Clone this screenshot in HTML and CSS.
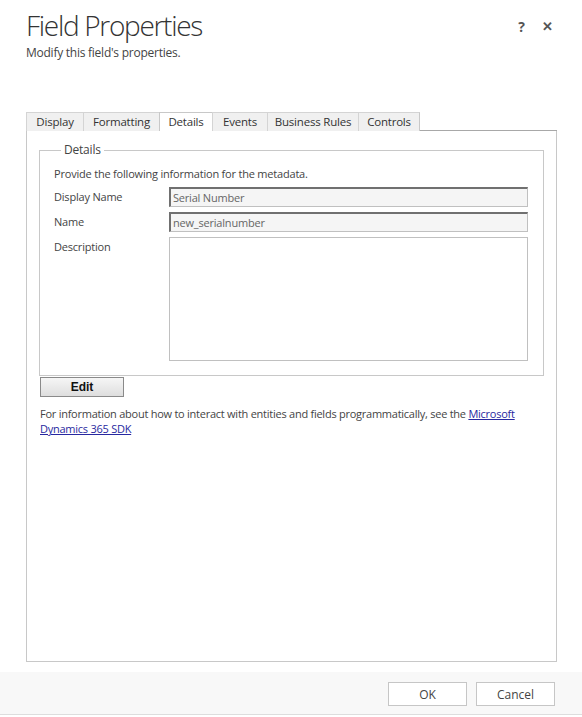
FILE: index.html
```html
<!DOCTYPE html>
<html lang="en">
<head>
    <meta charset="UTF-8">
    <title>Field Properties</title>
    <link rel="stylesheet" href="styles.css">
</head>
<body>
<div class="dialog">
    <div class="dialog_header">
        <div class="header_text">
            <h1 class="title">Field Properties</h1>
            <div class="subtitle">Modify this field's properties.</div>
        </div>
        <div class="header_icons">
            <span class="help_icon">?</span>
            <span class="close_icon">&#x2715;</span>
        </div>
    </div>

    <div class="dialog_body">
        <div class="tabs">
            <span class="tab tab_display">Display</span>
            <span class="tab tab_formatting">Formatting</span>
            <span class="tab tab_details tab_selected">Details</span>
            <span class="tab tab_events">Events</span>
            <span class="tab tab_rules">Business Rules</span>
            <span class="tab tab_controls">Controls</span>
            <span class="tab_rest"></span>
        </div>
        <div class="tab_panel">
            <fieldset class="details_box">
                <legend>Details</legend>
                <div class="intro">Provide the following information for the metadata.</div>
                <div class="field_row">
                    <label class="field_label">Display Name</label>
                    <input class="field_input" type="text" value="Serial Number" readonly>
                </div>
                <div class="field_row">
                    <label class="field_label">Name</label>
                    <input class="field_input" type="text" value="new_serialnumber" readonly>
                </div>
                <div class="field_row">
                    <label class="field_label">Description</label>
                    <textarea class="field_area"></textarea>
                </div>
            </fieldset>
            <button class="edit_button">Edit</button>
            <p class="sdk_note">For information about how to interact with entities and fields programmatically, see the <a href="#">Microsoft Dynamics 365 SDK</a></p>
        </div>
    </div>

    <div class="dialog_footer">
        <button class="footer_button">OK</button>
        <button class="footer_button">Cancel</button>
    </div>
</div>
</body>
</html>
```

FILE: styles.css
```css
body{
    margin: 0;
    background-color: white;
    font-family: 'Open Sans', sans-serif;
    font-size: 11px;
    letter-spacing: -0.2px;
    color: #444444;
}

.dialog{
    width: 582px;
    height: 717px;
    display: flex;
    flex-direction: column;
}

.dialog_header{
    display: flex;
    justify-content: space-between;
    padding: 7px 26px 0 26px;
    height: 112px;
    box-sizing: border-box;
}

.title{
    margin: 0;
    font-size: 28px;
    font-weight: 300;
    letter-spacing: -1.3px;
    color: #333333;
    line-height: 36px;
}

.subtitle{
    margin-top: 1px;
    font-size: 12px;
    letter-spacing: -0.25px;
    line-height: 18px;
    color: #444444;
}

.header_icons{
    display: flex;
    gap: 17px;
    padding-top: 10px;
    margin-right: 3px;
    font-size: 14px;
    font-weight: bold;
    letter-spacing: 0;
    color: #555555;
}

.close_icon{
    font-size: 13px;
}

.dialog_body{
    margin-left: 26px;
    width: 531px;
}

.tabs{
    display: flex;
    height: 19px;
}

.tab{
    box-sizing: border-box;
    background-color: #f0f0f0;
    border: 1px solid #d4d4d4;
    border-bottom: none;
    border-right: none;
    line-height: 18px;
    font-size: 11.5px;
    text-align: center;
    color: #333333;
}

.tab_display{ width: 57px; }
.tab_formatting{ width: 76px; }
.tab_details{ width: 53px; }
.tab_events{ width: 55px; }
.tab_rules{ width: 91px; }
.tab_controls{ width: 62px; border-right: 1px solid #c8c8c8; }

.tab_selected{
    background-color: white;
    border-left-color: #c8c8c8;
    border-top-color: #c8c8c8;
}

.tab_rest{
    flex: 1;
    border-bottom: 1px solid #a8a8a8;
}

.tab_panel{
    box-sizing: border-box;
    border: 1px solid #c8c8c8;
    border-top: none;
    height: 531px;
    padding: 12px 12px 0 12px;
}

.details_box{
    margin: 0;
    border: 1px solid #c8c8c8;
    padding: 9px 15px 14px 14px;
}

.details_box legend{
    padding: 0 3px;
    margin-left: 7px;
    font-size: 12px;
    color: #444444;
    line-height: 14px;
}

.intro{
    line-height: 16px;
    margin-bottom: 5px;
}

.field_row{
    display: flex;
    margin-bottom: 5px;
}

.field_row:last-child{
    margin-bottom: 0;
}

.field_label{
    width: 115px;
    line-height: 18px;
    padding-top: 1px;
}

.field_input{
    flex: 1;
    height: 20px;
    box-sizing: border-box;
    margin: 0;
    padding: 0 2px;
    font-family: inherit;
    font-size: 11px;
    letter-spacing: -0.2px;
    color: #666666;
    background-color: #f5f5f5;
    border-top: 2px solid #707070;
    border-left: 2px solid #707070;
    border-right: 1px solid #c0c0c0;
    border-bottom: 1px solid #c0c0c0;
    outline: none;
}

.field_area{
    flex: 1;
    height: 124px;
    box-sizing: border-box;
    margin: 0;
    resize: none;
    border: 1px solid #c0c0c0;
    background-color: white;
}

.edit_button{
    display: block;
    margin: 1px 0 0 1px;
    width: 84px;
    height: 20px;
    padding: 0;
    border: 1px solid #8a8a8a;
    background: linear-gradient(#f6f6f6, #dedede);
    font-family: 'Liberation Sans', Arial, sans-serif;
    font-size: 12px;
    font-weight: bold;
    letter-spacing: 0;
    color: #111111;
}

.sdk_note{
    margin: 9px 0 0 1px;
    line-height: 15px;
    width: 490px;
    letter-spacing: -0.25px;
}

.sdk_note a{
    color: #2828a0;
    line-height: 15px;
}

.dialog_footer{
    margin-top: 10px;
    height: 43px;
    background-color: #f8f8f8;
    border-bottom: 1px solid #dddddd;
    display: flex;
    justify-content: flex-end;
    align-items: flex-start;
    gap: 9px;
    padding: 10px 27px 0 0;
    box-sizing: border-box;
}

.footer_button{
    width: 79px;
    height: 24px;
    background-color: white;
    border: 1px solid #c6c6c6;
    font-family: inherit;
    font-size: 12px;
    color: #444444;
}
```
